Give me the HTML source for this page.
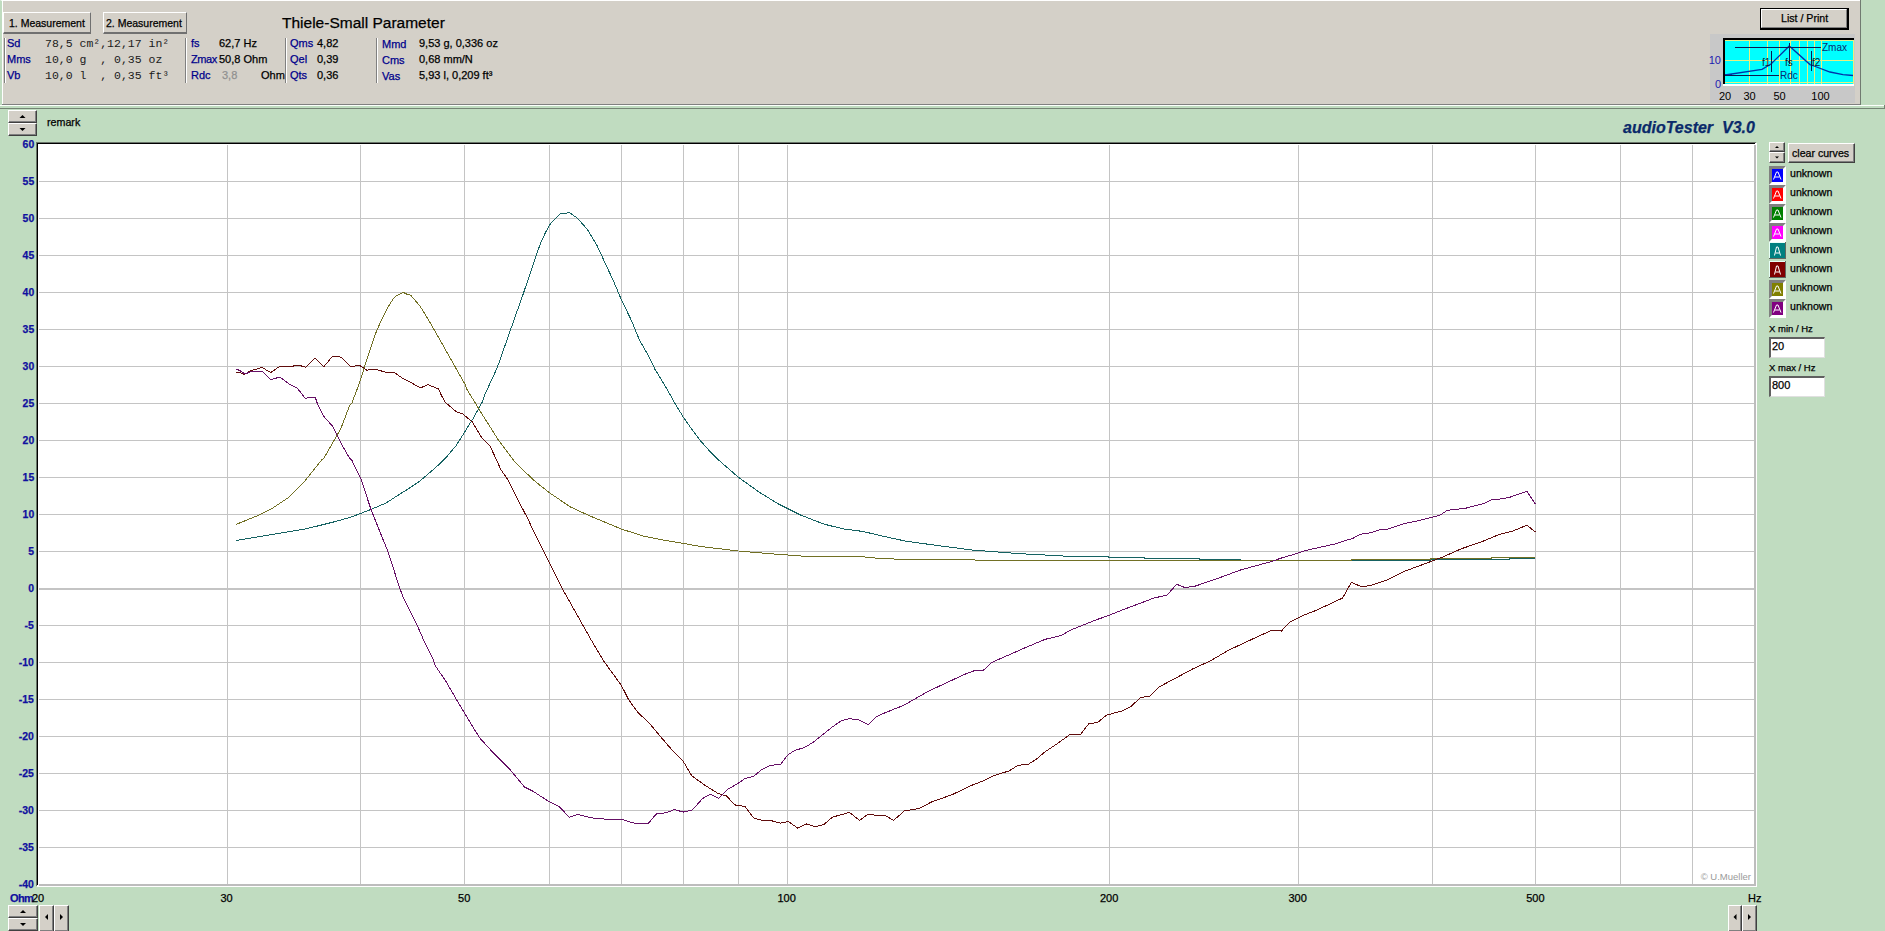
<!DOCTYPE html><html><head><meta charset="utf-8"><style>
*{margin:0;padding:0;box-sizing:border-box}
html,body{width:1885px;height:931px;overflow:hidden;background:#c0dcc0;font-family:"Liberation Sans",sans-serif;position:relative}
.a{position:absolute;white-space:nowrap;line-height:1;-webkit-text-stroke:0.25px currentColor}
.btn{position:absolute;background:#d4d0c8;border-top:1px solid #fff;border-left:1px solid #fff;border-right:1px solid #404040;border-bottom:1px solid #404040;box-shadow:inset -1px -1px 0 #808080}
.btn2{position:absolute;background:#d4d0c8;border-top:1px solid #fff;border-left:1px solid #fff;border-right:1px solid #707070;border-bottom:2px solid #707070}
.lbl{color:#00008b}
.mono{font-family:"Liberation Mono",monospace;-webkit-text-stroke:0 !important}
.sep{position:absolute;width:2px;border-left:1px solid #808080;border-right:1px solid #fff}
</style></head><body><div class="a" style="left:0;top:0;width:1861px;height:105px;background:#d4d0c8;border-top:1px solid #fff;border-left:2px solid #c0dcc0"></div>
<div class="a" style="left:2px;top:1px;width:1px;height:103px;background:#fff"></div>
<div class="a" style="left:2px;top:104px;width:1859px;height:1px;background:#808080"></div>
<div class="a" style="left:1860px;top:0;width:1px;height:105px;background:#707a70"></div>
<div class="a" style="left:0;top:105px;width:1884px;height:1px;background:#fbfffb"></div>
<div class="a" style="left:0;top:108px;width:1885px;height:1px;background:#748474"></div>
<div class="a" style="left:1884px;top:105px;width:1px;height:4px;background:#748474"></div>
<div class="a" style="left:1854px;top:101px;width:1px;height:1px;background:#000"></div>
<div class="btn2" style="left:3px;top:12px;width:88px;height:22px"></div>
<div class="a" style="left:9px;top:18px;font-size:10.5px;color:#000">1. Measurement</div>
<div class="btn2" style="left:103px;top:12px;width:84px;height:22px"></div>
<div class="a" style="left:106px;top:18px;font-size:10.5px;color:#000">2. Measurement</div>
<div class="a" style="left:282px;top:14.5px;font-size:15.5px;color:#000">Thiele-Small Parameter</div>
<div class="sep" style="left:4px;top:38px;height:45px"></div>
<div class="sep" style="left:185px;top:38px;height:45px"></div>
<div class="sep" style="left:285px;top:38px;height:45px"></div>
<div class="sep" style="left:376px;top:38px;height:45px"></div>
<div class="a lbl" style="left:7px;top:38px;font-size:11px">Sd</div>
<div class="a mono" style="left:45px;top:37.5px;font-size:11.5px;color:#1a1a1a;white-space:pre">78,5 cm&#178;,12,17 in&#178;</div>
<div class="a lbl" style="left:7px;top:54px;font-size:11px">Mms</div>
<div class="a mono" style="left:45px;top:53.5px;font-size:11.5px;color:#1a1a1a;white-space:pre">10,0 g  , 0,35 oz</div>
<div class="a lbl" style="left:7px;top:70px;font-size:11px">Vb</div>
<div class="a mono" style="left:45px;top:69.5px;font-size:11.5px;color:#1a1a1a;white-space:pre">10,0 l  , 0,35 ft&#179;</div>
<div class="a lbl" style="left:191px;top:38px;font-size:11px;letter-spacing:0px">fs</div>
<div class="a" style="left:219px;top:38px;font-size:11px;color:#000">62,7 Hz</div>
<div class="a lbl" style="left:191px;top:54px;font-size:11px;letter-spacing:-0.4px">Zmax</div>
<div class="a" style="left:219px;top:54px;font-size:11px;color:#000">50,8 Ohm</div>
<div class="a lbl" style="left:191px;top:70px;font-size:11px;letter-spacing:0px">Rdc</div>
<div class="a" style="left:222px;top:70px;font-size:11px;color:#909090">3,8</div>
<div class="a" style="left:261px;top:70px;font-size:11px;color:#000">Ohm</div>
<div class="a lbl" style="left:290px;top:38px;font-size:11px">Qms</div>
<div class="a" style="left:317px;top:38px;font-size:11px;color:#000">4,82</div>
<div class="a lbl" style="left:290px;top:54px;font-size:11px">Qel</div>
<div class="a" style="left:317px;top:54px;font-size:11px;color:#000">0,39</div>
<div class="a lbl" style="left:290px;top:70px;font-size:11px">Qts</div>
<div class="a" style="left:317px;top:70px;font-size:11px;color:#000">0,36</div>
<div class="a lbl" style="left:382px;top:39px;font-size:11px">Mmd</div>
<div class="a" style="left:419px;top:38px;font-size:11px;color:#000">9,53 g, 0,336 oz</div>
<div class="a lbl" style="left:382px;top:55px;font-size:11px">Cms</div>
<div class="a" style="left:419px;top:54px;font-size:11px;color:#000">0,68 mm/N</div>
<div class="a lbl" style="left:382px;top:71px;font-size:11px">Vas</div>
<div class="a" style="left:419px;top:70px;font-size:11px;color:#000">5,93 l, 0,209 ft&#179;</div>
<div class="a" style="left:1760px;top:8px;width:89px;height:22px;border:1px solid #000;border-right-width:2px;border-bottom-width:2px;background:#d4d0c8"><div style="position:absolute;left:0;top:0;right:0;bottom:0;border-top:1px solid #fff;border-left:1px solid #fff;border-right:1px solid #808080;border-bottom:1px solid #808080"></div></div>
<div class="a" style="left:1781px;top:13px;font-size:10.6px;color:#000">List / Print</div>
<div class="a" style="left:1710px;top:34px;width:145px;height:69px;background:#c8c8c8"></div>
<svg class="a" style="left:0;top:0" width="1885" height="110"><rect x="1723" y="38" width="131" height="46" fill="#00ffff"/><rect x="1749" y="40" width="1" height="44" fill="#e8f080"/><rect x="1767" y="40" width="1" height="44" fill="#e8f080"/><rect x="1779" y="40" width="1" height="44" fill="#e8f080"/><rect x="1790" y="40" width="1" height="44" fill="#e8f080"/><rect x="1799" y="40" width="1" height="44" fill="#e8f080"/><rect x="1807" y="40" width="1" height="44" fill="#e8f080"/><rect x="1814" y="40" width="1" height="44" fill="#e8f080"/><rect x="1821" y="40" width="1" height="44" fill="#e8f080"/><rect x="1725" y="40" width="129" height="1" fill="#e8f080"/><rect x="1725" y="60" width="129" height="1" fill="#e8f080"/><rect x="1725" y="82" width="129" height="1" fill="#e8f080"/><rect x="1853" y="40" width="1" height="44" fill="#e8f080"/><rect x="1723" y="38" width="131" height="2" fill="#000"/><rect x="1723" y="38" width="2" height="46" fill="#000"/><rect x="1723" y="84" width="131" height="2" fill="#fff"/><polyline points="1725,75 1762,69.4 1771,64 1789.3,46 1810,64.6 1814,66 1830,72 1843,74.6 1853,75.5" fill="none" stroke="#0033aa" stroke-width="1.3"/><rect x="1725" y="74" width="7" height="2" fill="#0033aa"/><rect x="1735" y="47" width="86" height="1" fill="#0a1a50"/><rect x="1725" y="75" width="54" height="1" fill="#0a1a50"/><rect x="1771" y="51" width="1" height="21" fill="#0a1a50"/><rect x="1789" y="43" width="1" height="21" fill="#0a1a50"/><rect x="1811" y="51" width="1" height="20" fill="#0a1a50"/><text x="1822" y="51" font-size="10px" fill="#0a2a70" font-family="Liberation Sans">Zmax</text><text x="1762" y="66" font-size="10px" fill="#0a1a30" font-family="Liberation Sans">f1</text><text x="1785" y="66" font-size="10px" fill="#0a1a30" font-family="Liberation Sans">fs</text><text x="1812" y="66" font-size="10px" fill="#0a1a30" font-family="Liberation Sans">f2</text><text x="1780" y="79" font-size="10px" fill="#0a2a70" font-family="Liberation Sans">Rdc</text><text x="1721" y="64" font-size="11px" fill="#1a1ab0" text-anchor="end" font-family="Liberation Sans">10</text><text x="1721" y="88" font-size="11px" fill="#1a1ab0" text-anchor="end" font-family="Liberation Sans">0</text><text x="1725" y="100" font-size="11px" fill="#000" text-anchor="middle" font-family="Liberation Sans">20</text><text x="1749.5" y="100" font-size="11px" fill="#000" text-anchor="middle" font-family="Liberation Sans">30</text><text x="1779.5" y="100" font-size="11px" fill="#000" text-anchor="middle" font-family="Liberation Sans">50</text><text x="1820.5" y="100" font-size="11px" fill="#000" text-anchor="middle" font-family="Liberation Sans">100</text></svg>
<div class="btn" style="left:8px;top:110px;width:29px;height:13px"></div>
<div class="btn" style="left:8px;top:123px;width:29px;height:13px"></div>
<svg class="a" style="left:0;top:0;overflow:visible" width="1" height="1"><polygon points="19.5,118.0 25.5,118.0 22.5,115.0" fill="#000"/><polygon points="19.5,128.0 25.5,128.0 22.5,131.0" fill="#000"/></svg>
<div class="a" style="left:47px;top:117px;font-size:10.7px;color:#000">remark</div>
<div class="a" style="left:1623px;top:120px;font-size:16px;font-weight:bold;font-style:italic;color:#0a2a6a;white-space:pre">audioTester  V3.0</div>
<svg class="a" style="left:0;top:0" width="1885" height="931"><rect x="37" y="143" width="1719" height="744" fill="#fff"/><rect x="227" y="145" width="1" height="740" fill="#c4c4c4"/><rect x="360" y="145" width="1" height="740" fill="#c4c4c4"/><rect x="464" y="145" width="1" height="740" fill="#c4c4c4"/><rect x="549" y="145" width="1" height="740" fill="#c4c4c4"/><rect x="621" y="145" width="1" height="740" fill="#c4c4c4"/><rect x="683" y="145" width="1" height="740" fill="#c4c4c4"/><rect x="738" y="145" width="1" height="740" fill="#c4c4c4"/><rect x="787" y="145" width="1" height="740" fill="#c4c4c4"/><rect x="1109" y="145" width="1" height="740" fill="#c4c4c4"/><rect x="1298" y="145" width="1" height="740" fill="#c4c4c4"/><rect x="1432" y="145" width="1" height="740" fill="#c4c4c4"/><rect x="1535" y="145" width="1" height="740" fill="#c4c4c4"/><rect x="1620" y="145" width="1" height="740" fill="#c4c4c4"/><rect x="1692" y="145" width="1" height="740" fill="#c4c4c4"/><rect x="39" y="181" width="1715" height="1" fill="#c4c4c4"/><rect x="39" y="218" width="1715" height="1" fill="#c4c4c4"/><rect x="39" y="255" width="1715" height="1" fill="#c4c4c4"/><rect x="39" y="292" width="1715" height="1" fill="#c4c4c4"/><rect x="39" y="329" width="1715" height="1" fill="#c4c4c4"/><rect x="39" y="366" width="1715" height="1" fill="#c4c4c4"/><rect x="39" y="403" width="1715" height="1" fill="#c4c4c4"/><rect x="39" y="440" width="1715" height="1" fill="#c4c4c4"/><rect x="39" y="477" width="1715" height="1" fill="#c4c4c4"/><rect x="39" y="514" width="1715" height="1" fill="#c4c4c4"/><rect x="39" y="551" width="1715" height="1" fill="#c4c4c4"/><rect x="39" y="588" width="1715" height="2" fill="#c4c4c4"/><rect x="39" y="625" width="1715" height="1" fill="#c4c4c4"/><rect x="39" y="662" width="1715" height="1" fill="#c4c4c4"/><rect x="39" y="699" width="1715" height="1" fill="#c4c4c4"/><rect x="39" y="736" width="1715" height="1" fill="#c4c4c4"/><rect x="39" y="773" width="1715" height="1" fill="#c4c4c4"/><rect x="39" y="810" width="1715" height="1" fill="#c4c4c4"/><rect x="39" y="847" width="1715" height="1" fill="#c4c4c4"/><rect x="36" y="142" width="1720" height="1" fill="#6a746a"/><rect x="36" y="142" width="1" height="744" fill="#6a746a"/><rect x="37" y="143" width="1718" height="1" fill="#000"/><rect x="37" y="143" width="1" height="742" fill="#000"/><rect x="39" y="884" width="1716" height="2" fill="#bdbdbd"/><rect x="1754" y="145" width="2" height="741" fill="#bdbdbd"/><rect x="37" y="886" width="1720" height="1" fill="#fff"/><rect x="1756" y="143" width="1" height="744" fill="#fff"/><polyline points="236.2,540.5 268.0,535.2 306.6,528.7 332.4,522.3 351.7,516.9 371.0,509.4 386.1,503.0 399.3,494.4 409.0,488.4 418.6,482.0 429.4,472.9 438.0,465.4 447.6,455.7 456.2,445.5 463.7,433.7 470.2,422.9 473.4,418.1 482.0,402.5 484.7,395.0 497.3,367.5 510.1,331.0 523.0,294.5 526.4,284.5 536.3,254.8 540.6,243.2 545.3,232.9 550.5,223.5 560.4,213.3 566.4,213.3 569.0,212.3 577.6,218.3 587.4,229.5 596.5,244.5 613.6,281.3 621.1,299.0 631.4,320.5 639.4,339.8 648.0,354.9 655.0,369.4 658.3,374.5 666.9,389.0 674.4,402.4 683.5,417.5 692.6,430.4 701.2,441.6 709.8,451.3 718.7,460.1 738.4,477.3 759.5,492.4 778.8,504.2 800.3,514.9 823.9,524.1 843.2,528.9 862.6,531.4 884.0,536.4 905.5,541.1 920.0,543.1 930.0,544.5 970.9,549.9 1021.9,553.8 1072.8,556.5 1108.0,556.5 1108.0,557.5 1144.0,557.5 1144.0,558.5 1199.0,558.5 1199.0,559.5 1240.0,559.5 1240.0,560.5 1430.0,560.5 1430.0,559.5 1509.0,559.5 1509.0,558.5 1535.0,558.5" fill="none" stroke="#166262" stroke-width="1" shape-rendering="crispEdges"/><polyline points="236.2,524.4 257.2,515.8 271.2,509.0 288.4,497.6 305.5,480.4 306.6,478.7 321.6,460.0 323.8,458.3 341.0,428.2 349.8,405.0 351.7,403.5 359.8,382.1 365.3,364.5 375.6,333.5 380.8,321.5 387.2,308.6 393.2,298.7 395.8,296.2 403.1,292.3 406.5,294.0 410.8,295.3 420.3,306.5 429.7,321.9 438.3,337.0 453.8,364.5 464.0,382.6 465.5,385.2 467.2,390.0 472.6,398.7 482.9,415.5 498.4,440.0 513.8,460.6 525.4,472.2 535.7,481.9 549.5,492.8 570.5,507.0 590.0,516.0 621.8,529.2 643.3,536.0 664.8,540.3 680.0,542.8 700.0,546.4 738.4,551.0 776.6,554.2 806.7,556.4 862.6,556.8 884.0,558.9 930.0,559.4 943.0,559.6 1014.2,560.5 1351.0,560.5 1351.0,559.5 1430.0,559.5 1430.0,558.5 1491.0,558.5 1491.0,557.5 1535.0,557.5" fill="none" stroke="#727024" stroke-width="1" shape-rendering="crispEdges"/><polyline points="236.2,372.5 239.9,372.5 244.3,374.3 250.3,371.0 254.7,369.5 257.7,368.9 261.8,367.3 270.7,372.6 279.2,366.7 292.6,366.5 294.8,365.4 299.3,365.4 306.0,367.3 314.9,358.2 323.8,366.7 332.4,356.5 338.7,356.5 341.3,357.3 350.5,366.5 359.5,365.4 363.9,368.0 366.8,370.2 375.3,369.1 386.1,372.4 394.7,372.8 403.3,378.8 411.9,383.1 420.4,388.0 428.0,384.6 438.7,389.1 441.2,395.0 445.5,402.5 456.2,411.6 462.7,413.8 472.3,421.9 481.6,437.4 490.0,445.8 500.9,469.6 508.0,479.9 517.0,498.0 528.0,519.2 535.9,536.0 544.5,553.2 553.1,570.4 561.7,587.6 591.2,640.0 604.0,661.5 621.2,685.1 628.8,700.0 638.1,712.7 648.3,722.1 661.9,738.2 672.1,750.1 683.1,761.1 691.6,775.6 704.3,784.9 717.9,793.4 726.4,795.9 734.9,804.9 745.1,806.6 753.6,818.0 762.9,820.5 770.5,820.5 780.7,823.1 788.4,821.4 797.7,828.2 806.2,823.9 815.5,826.8 824.0,824.4 832.5,817.1 849.5,812.4 859.7,820.5 867.3,814.6 880.0,815.4 885.4,815.7 893.6,820.4 904.3,811.0 919.6,808.4 931.5,802.0 952.7,794.4 971.6,785.4 983.4,780.7 994.1,775.5 1009.4,770.8 1017.7,765.4 1028.4,764.2 1036.6,759.0 1044.9,751.9 1059.1,742.4 1069.7,734.6 1080.3,734.6 1088.6,724.0 1098.1,722.1 1106.3,715.2 1121.7,711.0 1131.2,706.3 1140.6,697.5 1150.1,696.1 1159.5,686.7 1170.2,681.0 1192.8,668.9 1210.5,660.8 1228.2,650.4 1252.4,639.1 1271.7,630.2 1281.4,631.0 1289.4,622.5 1305.6,614.4 1316.8,610.1 1342.6,598.0 1351.5,582.2 1361.4,586.8 1370.7,585.4 1386.0,580.4 1403.0,571.9 1432.7,560.8 1443.7,556.6 1460.7,549.0 1482.8,541.3 1499.8,534.2 1511.6,531.5 1526.9,525.2 1535.4,532.0" fill="none" stroke="#600c0c" stroke-width="1" shape-rendering="crispEdges"/><polyline points="236.2,369.1 239.9,370.6 245.1,374.0 252.5,371.0 262.2,371.0 270.7,379.5 280.0,377.1 289.6,384.4 297.1,387.9 305.2,398.3 310.4,397.4 315.3,397.4 317.9,405.0 323.8,416.4 332.4,426.0 341.0,443.2 349.6,458.3 351.7,460.0 360.3,477.2 371.0,509.4 388.2,552.4 400.0,588.9 403.3,597.5 416.2,623.2 423.6,640.0 433.3,659.7 435.4,665.8 446.2,681.9 464.4,713.0 479.5,737.7 490.2,749.5 508.5,767.8 524.6,787.1 533.2,791.4 548.2,801.1 558.9,806.5 569.3,817.1 577.8,814.6 594.0,818.3 609.2,819.4 622.8,819.7 630.5,822.2 636.4,823.4 648.3,823.4 656.8,813.4 666.1,812.9 674.6,809.5 683.1,812.1 692.4,810.0 702.6,798.5 710.3,794.2 718.7,798.5 727.2,789.6 738.3,783.2 745.1,778.4 753.6,776.4 762.0,769.3 770.5,765.4 780.7,764.2 787.5,755.2 794.3,750.6 804.5,747.5 813.0,742.4 821.5,735.7 831.6,727.5 841.8,720.4 849.5,718.7 858.8,720.0 868.2,724.6 875.8,717.0 880.0,714.9 893.6,709.3 903.1,705.6 929.1,690.9 964.5,674.4 974.0,670.8 983.4,670.3 991.7,662.5 1023.6,648.4 1044.9,639.4 1061.4,635.4 1070.9,629.9 1095.7,620.0 1105.8,616.5 1128.3,607.7 1154.1,598.0 1167.0,595.1 1176.7,584.3 1184.7,587.5 1194.4,586.4 1216.9,578.7 1241.1,569.8 1274.0,560.8 1279.8,558.5 1299.4,552.7 1305.6,550.5 1316.4,548.1 1335.1,543.9 1347.4,540.0 1352.0,538.8 1360.5,534.2 1370.7,532.8 1379.2,529.8 1387.7,529.1 1404.7,523.5 1413.2,521.8 1432.7,517.2 1440.3,515.0 1447.1,510.4 1465.8,508.2 1483.6,503.6 1491.3,499.7 1501.5,498.9 1510.0,497.2 1526.9,491.2 1535.4,504.0" fill="none" stroke="#661066" stroke-width="1" shape-rendering="crispEdges"/><text x="1751" y="880" font-size="9.5" fill="#9a9a9a" text-anchor="end" font-family="Liberation Sans">&#169; U.Mueller</text></svg>
<div class="a" style="right:1851px;top:139.0px;font-size:11px;color:#10109e;font-weight:bold;transform:scaleX(0.95);transform-origin:right">60</div>
<div class="a" style="right:1851px;top:176.0px;font-size:11px;color:#10109e;font-weight:bold;transform:scaleX(0.95);transform-origin:right">55</div>
<div class="a" style="right:1851px;top:213.0px;font-size:11px;color:#10109e;font-weight:bold;transform:scaleX(0.95);transform-origin:right">50</div>
<div class="a" style="right:1851px;top:250.0px;font-size:11px;color:#10109e;font-weight:bold;transform:scaleX(0.95);transform-origin:right">45</div>
<div class="a" style="right:1851px;top:287.0px;font-size:11px;color:#10109e;font-weight:bold;transform:scaleX(0.95);transform-origin:right">40</div>
<div class="a" style="right:1851px;top:324.0px;font-size:11px;color:#10109e;font-weight:bold;transform:scaleX(0.95);transform-origin:right">35</div>
<div class="a" style="right:1851px;top:361.0px;font-size:11px;color:#10109e;font-weight:bold;transform:scaleX(0.95);transform-origin:right">30</div>
<div class="a" style="right:1851px;top:398.0px;font-size:11px;color:#10109e;font-weight:bold;transform:scaleX(0.95);transform-origin:right">25</div>
<div class="a" style="right:1851px;top:435.0px;font-size:11px;color:#10109e;font-weight:bold;transform:scaleX(0.95);transform-origin:right">20</div>
<div class="a" style="right:1851px;top:472.0px;font-size:11px;color:#10109e;font-weight:bold;transform:scaleX(0.95);transform-origin:right">15</div>
<div class="a" style="right:1851px;top:509.0px;font-size:11px;color:#10109e;font-weight:bold;transform:scaleX(0.95);transform-origin:right">10</div>
<div class="a" style="right:1851px;top:546.0px;font-size:11px;color:#10109e;font-weight:bold;transform:scaleX(0.95);transform-origin:right">5</div>
<div class="a" style="right:1851px;top:583.0px;font-size:11px;color:#10109e;font-weight:bold;transform:scaleX(0.95);transform-origin:right">0</div>
<div class="a" style="right:1851px;top:620.0px;font-size:11px;color:#10109e;font-weight:bold;transform:scaleX(0.95);transform-origin:right">-5</div>
<div class="a" style="right:1851px;top:657.0px;font-size:11px;color:#10109e;font-weight:bold;transform:scaleX(0.95);transform-origin:right">-10</div>
<div class="a" style="right:1851px;top:694.0px;font-size:11px;color:#10109e;font-weight:bold;transform:scaleX(0.95);transform-origin:right">-15</div>
<div class="a" style="right:1851px;top:731.0px;font-size:11px;color:#10109e;font-weight:bold;transform:scaleX(0.95);transform-origin:right">-20</div>
<div class="a" style="right:1851px;top:768.0px;font-size:11px;color:#10109e;font-weight:bold;transform:scaleX(0.95);transform-origin:right">-25</div>
<div class="a" style="right:1851px;top:805.0px;font-size:11px;color:#10109e;font-weight:bold;transform:scaleX(0.95);transform-origin:right">-30</div>
<div class="a" style="right:1851px;top:842.0px;font-size:11px;color:#10109e;font-weight:bold;transform:scaleX(0.95);transform-origin:right">-35</div>
<div class="a" style="right:1851px;top:879.0px;font-size:11px;color:#10109e;font-weight:bold;transform:scaleX(0.95);transform-origin:right">-40</div>
<div class="a" style="left:196.6px;width:60px;text-align:center;top:893px;font-size:11px;color:#000">30</div>
<div class="a" style="left:434.2px;width:60px;text-align:center;top:893px;font-size:11px;color:#000">50</div>
<div class="a" style="left:756.7px;width:60px;text-align:center;top:893px;font-size:11px;color:#000">100</div>
<div class="a" style="left:1079.1px;width:60px;text-align:center;top:893px;font-size:11px;color:#000">200</div>
<div class="a" style="left:1267.7px;width:60px;text-align:center;top:893px;font-size:11px;color:#000">300</div>
<div class="a" style="left:1505.4px;width:60px;text-align:center;top:893px;font-size:11px;color:#000">500</div>
<div class="a" style="left:10px;top:893px;font-size:11px;color:#10109e;font-weight:bold;letter-spacing:-0.6px">Ohm</div>
<div class="a" style="left:32px;top:893px;font-size:11px;color:#000">20</div>
<div class="a" style="left:1748px;top:893px;font-size:11px;color:#000">Hz</div>
<div class="btn" style="left:8px;top:905px;width:30px;height:13px"></div>
<div class="btn" style="left:8px;top:918px;width:30px;height:13px"></div>
<svg class="a" style="left:0;top:0;overflow:visible" width="1" height="1"><polygon points="20.0,913.0 26.0,913.0 23.0,910.0" fill="#000"/><polygon points="20.0,923.0 26.0,923.0 23.0,926.0" fill="#000"/></svg>
<div class="btn" style="left:39px;top:905px;width:15px;height:27px"></div>
<svg class="a" style="left:0;top:0;overflow:visible" width="1" height="1"><polygon points="48.0,914 48.0,920 45.0,917" fill="#000"/></svg>
<div class="btn" style="left:54px;top:905px;width:15px;height:27px"></div>
<svg class="a" style="left:0;top:0;overflow:visible" width="1" height="1"><polygon points="60.0,914 60.0,920 63.0,917" fill="#000"/></svg>
<div class="btn" style="left:1728px;top:905px;width:14px;height:27px"></div>
<svg class="a" style="left:0;top:0;overflow:visible" width="1" height="1"><polygon points="1736.5,914 1736.5,920 1733.5,917" fill="#000"/></svg>
<div class="btn" style="left:1742px;top:905px;width:15px;height:27px"></div>
<svg class="a" style="left:0;top:0;overflow:visible" width="1" height="1"><polygon points="1748.0,914 1748.0,920 1751.0,917" fill="#000"/></svg>
<div class="btn" style="left:1769px;top:142px;width:16px;height:10px"></div>
<div class="btn" style="left:1769px;top:152px;width:16px;height:11px"></div>
<svg class="a" style="left:0;top:0;overflow:visible" width="1" height="1"><polygon points="1775.0,148.0 1779.0,148.0 1777.0,146.0" fill="#000"/><polygon points="1775.0,156.5 1779.0,156.5 1777.0,158.5" fill="#000"/></svg>
<div class="btn" style="left:1788px;top:143px;width:67px;height:20px"></div>
<div class="a" style="left:1792px;top:148px;font-size:10.6px;color:#000">clear curves</div>
<svg class="a" style="left:1769px;top:166px" width="17" height="19"><polygon points="0,0 17,0 14,3 3,3 3,16 0,19" fill="#808080"/><polygon points="17,0 17,19 0,19 3,16 14,16 14,3" fill="#fff"/><rect x="3" y="3" width="11" height="13" fill="#0000ff"/><polyline points="4.5,13.5 7.5,6 9,6 12,13.5" fill="none" stroke="#fff" stroke-width="1"/><line x1="6" y1="11" x2="10.5" y2="11" stroke="#fff" stroke-width="1"/></svg>
<div class="a" style="left:1790px;top:168px;font-size:10.6px;color:#000">unknown</div>
<svg class="a" style="left:1769px;top:185px" width="17" height="19"><polygon points="0,0 17,0 14,3 3,3 3,16 0,19" fill="#808080"/><polygon points="17,0 17,19 0,19 3,16 14,16 14,3" fill="#fff"/><rect x="3" y="3" width="11" height="13" fill="#ff0000"/><polyline points="4.5,13.5 7.5,6 9,6 12,13.5" fill="none" stroke="#fff" stroke-width="1"/><line x1="6" y1="11" x2="10.5" y2="11" stroke="#fff" stroke-width="1"/></svg>
<div class="a" style="left:1790px;top:187px;font-size:10.6px;color:#000">unknown</div>
<svg class="a" style="left:1769px;top:204px" width="17" height="19"><polygon points="0,0 17,0 14,3 3,3 3,16 0,19" fill="#808080"/><polygon points="17,0 17,19 0,19 3,16 14,16 14,3" fill="#fff"/><rect x="3" y="3" width="11" height="13" fill="#008000"/><polyline points="4.5,13.5 7.5,6 9,6 12,13.5" fill="none" stroke="#fff" stroke-width="1"/><line x1="6" y1="11" x2="10.5" y2="11" stroke="#fff" stroke-width="1"/></svg>
<div class="a" style="left:1790px;top:206px;font-size:10.6px;color:#000">unknown</div>
<svg class="a" style="left:1769px;top:223px" width="17" height="19"><polygon points="0,0 17,0 14,3 3,3 3,16 0,19" fill="#808080"/><polygon points="17,0 17,19 0,19 3,16 14,16 14,3" fill="#fff"/><rect x="3" y="3" width="11" height="13" fill="#ff00ff"/><polyline points="4.5,13.5 7.5,6 9,6 12,13.5" fill="none" stroke="#fff" stroke-width="1"/><line x1="6" y1="11" x2="10.5" y2="11" stroke="#fff" stroke-width="1"/></svg>
<div class="a" style="left:1790px;top:225px;font-size:10.6px;color:#000">unknown</div>
<svg class="a" style="left:1769px;top:242px" width="17" height="19"><rect x="0.5" y="0" width="16" height="16.5" fill="#008080"/><rect x="0" y="0" width="16" height="1" fill="#e8fff8"/><rect x="0" y="0" width="1" height="16" fill="#e8fff8"/><rect x="0" y="16" width="17" height="1" fill="#606860"/><rect x="16" y="0" width="1" height="17" fill="#606860"/><polyline points="5.5,13.5 7.5,5 9,5 11.5,13.5" fill="none" stroke="#fff" stroke-width="1"/><line x1="6.5" y1="11" x2="10.5" y2="11" stroke="#fff" stroke-width="1"/></svg>
<div class="a" style="left:1790px;top:244px;font-size:10.6px;color:#000">unknown</div>
<svg class="a" style="left:1769px;top:261px" width="17" height="19"><rect x="0.5" y="0" width="16" height="16.5" fill="#800000"/><rect x="0" y="0" width="16" height="1" fill="#e8fff8"/><rect x="0" y="0" width="1" height="16" fill="#e8fff8"/><rect x="0" y="16" width="17" height="1" fill="#606860"/><rect x="16" y="0" width="1" height="17" fill="#606860"/><polyline points="5.5,13.5 7.5,5 9,5 11.5,13.5" fill="none" stroke="#fff" stroke-width="1"/><line x1="6.5" y1="11" x2="10.5" y2="11" stroke="#fff" stroke-width="1"/></svg>
<div class="a" style="left:1790px;top:263px;font-size:10.6px;color:#000">unknown</div>
<svg class="a" style="left:1769px;top:280px" width="17" height="19"><polygon points="0,0 17,0 14,3 3,3 3,16 0,19" fill="#808080"/><polygon points="17,0 17,19 0,19 3,16 14,16 14,3" fill="#fff"/><rect x="3" y="3" width="11" height="13" fill="#808000"/><polyline points="4.5,13.5 7.5,6 9,6 12,13.5" fill="none" stroke="#fff" stroke-width="1"/><line x1="6" y1="11" x2="10.5" y2="11" stroke="#fff" stroke-width="1"/></svg>
<div class="a" style="left:1790px;top:282px;font-size:10.6px;color:#000">unknown</div>
<svg class="a" style="left:1769px;top:299px" width="17" height="19"><polygon points="0,0 17,0 14,3 3,3 3,16 0,19" fill="#808080"/><polygon points="17,0 17,19 0,19 3,16 14,16 14,3" fill="#fff"/><rect x="3" y="3" width="11" height="13" fill="#800080"/><polyline points="4.5,13.5 7.5,6 9,6 12,13.5" fill="none" stroke="#fff" stroke-width="1"/><line x1="6" y1="11" x2="10.5" y2="11" stroke="#fff" stroke-width="1"/></svg>
<div class="a" style="left:1790px;top:301px;font-size:10.6px;color:#000">unknown</div>
<div class="a" style="left:1769px;top:324px;font-size:9.5px;color:#000">X min / Hz</div>
<div class="a" style="left:1769px;top:337px;width:56px;height:21px;background:#fff;border-top:2px solid #606060;border-left:2px solid #606060;border-right:1px solid #e0e0e0;border-bottom:1px solid #e0e0e0"></div>
<div class="a" style="left:1772px;top:341px;font-size:11px;color:#000">20</div>
<div class="a" style="left:1769px;top:363px;font-size:9.5px;color:#000">X max / Hz</div>
<div class="a" style="left:1769px;top:376px;width:56px;height:21px;background:#fff;border-top:2px solid #606060;border-left:2px solid #606060;border-right:1px solid #e0e0e0;border-bottom:1px solid #e0e0e0"></div>
<div class="a" style="left:1772px;top:380px;font-size:11px;color:#000">800</div></body></html>
